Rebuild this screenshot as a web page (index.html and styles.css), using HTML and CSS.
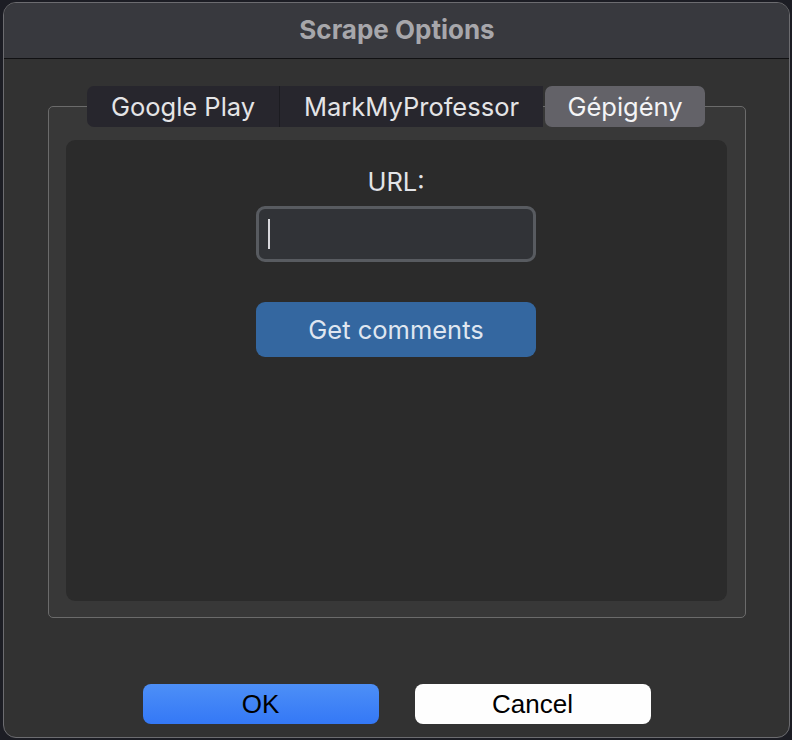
FILE: index.html
```html
<!DOCTYPE html>
<html lang="en">
<head>
<meta charset="utf-8">
<title>Scrape Options</title>
<link rel="stylesheet" href="styles.css">
</head>
<body>
<div class="window">
  <div class="titlebar">Scrape Options</div>
  <div class="content">
    <div class="groupbox">
      <div class="tabs">
        <div class="tab tab-first">Google Play</div>
        <div class="tab tab-mid">MarkMyProfessor</div>
        <div class="tab tab-selected">Gépigény</div>
      </div>
      <div class="pane">
        <div class="label">URL:</div>
        <div class="input"><span class="caret"></span></div>
        <div class="action">Get comments</div>
      </div>
    </div>
    <div class="buttons">
      <div class="btn btn-ok">OK</div>
      <div class="btn btn-cancel">Cancel</div>
    </div>
  </div>
</div>
</body>
</html>
```
FILE: styles.css
```css
*, *::before, *::after {
  box-sizing: border-box;
}
html, body {
  margin: 0;
  padding: 0;
  background: #1c1d24;
  width: 792px;
  height: 740px;
  overflow: hidden;
}
body {
  font-family: Inter, "Noto Sans", sans-serif;
}
.window {
  margin: 2px 0 0 3px;
  width: 787px;
  height: 736px;
  border: 1px solid #6c6c70;
  border-radius: 13px;
  background: #323232;
  overflow: hidden;
  display: flex;
  flex-direction: column;
}
.titlebar {
  height: 56px;
  flex: none;
  background: #38393e;
  border-bottom: 1px solid #111113;
  color: #a7a7ab;
  font-weight: 700;
  font-size: 26px;
  display: flex;
  align-items: center;
  justify-content: center;
  padding-left: 1px;
  padding-bottom: 2px;
}
.content {
  flex: 1;
  display: flex;
  flex-direction: column;
  align-items: center;
}
.groupbox {
  margin-top: 47px;
  width: 698px;
  height: 512px;
  flex: none;
  border: 1px solid #6b6b6b;
  border-radius: 5px;
  background: #383838;
  padding: 0 18px 16px 17px;
  display: flex;
  flex-direction: column;
}
.tabs {
  margin: -21px auto 13px;
  height: 41px;
  display: flex;
  width: 618px;
  flex: none;
}
.tab {
  display: flex;
  align-items: center;
  justify-content: center;
  color: #e4e4e6;
  font-size: 25.5px;
  background: #27262d;
  padding-bottom: 1px;
}
.tab-first {
  width: 193px;
  border-radius: 7px 0 0 7px;
  border-right: 1px solid #1c1c21;
}
.tab-mid {
  width: 263px;
  margin-right: 2px;
}
.tab-selected {
  width: 160px;
  background: #636268;
  border-radius: 7px;
  color: #f4f4f6;
}
.pane {
  flex: 1;
  background: #2b2b2b;
  border-radius: 9px;
  display: flex;
  flex-direction: column;
  align-items: center;
}
.label {
  margin-top: 27px;
  color: #e2e4e8;
  font-size: 25.5px;
  line-height: 30px;
}
.input {
  margin-top: 9px;
  width: 280px;
  height: 56px;
  border: 3px solid #585b60;
  border-radius: 9px;
  background: #313337;
  display: flex;
  align-items: center;
}
.caret {
  margin-left: 9px;
  width: 2px;
  height: 30px;
  background: #d8d8dc;
}
.action {
  margin-top: 40px;
  width: 280px;
  height: 55px;
  border-radius: 9px;
  background: #3467a0;
  color: #dfe6f0;
  font-size: 25.5px;
  display: flex;
  align-items: center;
  justify-content: center;
}
.buttons {
  margin-top: 66px;
  display: flex;
  gap: 36px;
}
.btn {
  width: 236px;
  height: 40px;
  border-radius: 8px;
  display: flex;
  align-items: center;
  justify-content: center;
  font-family: "Liberation Sans", Arial, sans-serif;
  font-size: 26px;
  color: #000;
}
.btn-ok {
  background: linear-gradient(#4d8ff7, #3478f6);
}
.btn-cancel {
  background: #fefefe;
}
```
